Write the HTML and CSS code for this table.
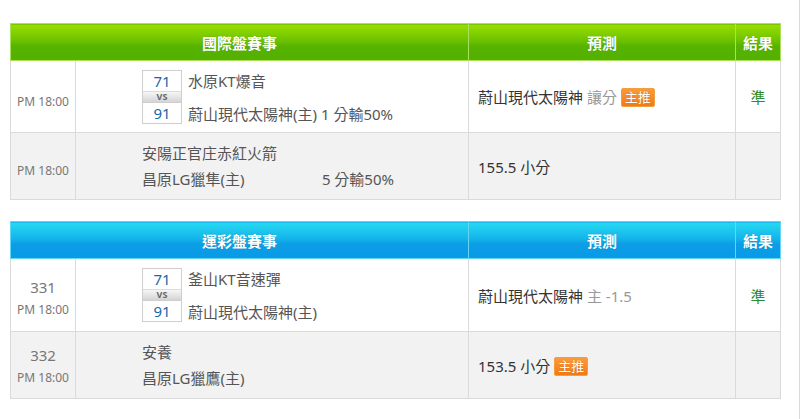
FILE: index.html
```html
<!DOCTYPE html>
<html lang="zh-Hant">
<head>
<meta charset="utf-8">
<title>賽事預測</title>
<link rel="stylesheet" href="styles.css">
</head>
<body>
<div class="page">
  <table class="board green">
    <colgroup><col class="c-time"><col class="c-match"><col class="c-pred"><col class="c-res"></colgroup>
    <thead>
      <tr><th colspan="2">國際盤賽事</th><th>預測</th><th>結果</th></tr>
    </thead>
    <tbody>
      <tr class="row-a">
        <td class="time"><div class="tbox shift"><div class="clock">PM 18:00</div></div></td>
        <td class="match">
          <div class="inner">
            <div class="score"><span class="num">71</span><span class="vs">VS</span><span class="num">91</span></div>
            <div class="teams"><span>水原KT爆音</span><span>蔚山現代太陽神(主) 1 分輸50%</span></div>
          </div>
        </td>
        <td class="pred">蔚山現代太陽神 <span class="muted">讓分</span> <span class="badge">主推</span></td>
        <td class="res">準</td>
      </tr>
      <tr class="row-b">
        <td class="time"><div class="tbox shift"><div class="clock">PM 18:00</div></div></td>
        <td class="match">
          <div class="inner plain">
            <div class="line">安陽正官庄赤紅火箭</div>
            <div class="line split"><span>昌原LG獵隼(主)</span><span>5 分輸50%</span></div>
          </div>
        </td>
        <td class="pred">155.5 小分</td>
        <td class="res"></td>
      </tr>
    </tbody>
  </table>

  <table class="board blue">
    <colgroup><col class="c-time"><col class="c-match"><col class="c-pred"><col class="c-res"></colgroup>
    <thead>
      <tr><th colspan="2">運彩盤賽事</th><th>預測</th><th>結果</th></tr>
    </thead>
    <tbody>
      <tr class="row-a">
        <td class="time"><div class="tbox nudge"><div class="gno">331</div><div class="clock">PM 18:00</div></div></td>
        <td class="match">
          <div class="inner">
            <div class="score"><span class="num">71</span><span class="vs">VS</span><span class="num">91</span></div>
            <div class="teams"><span>釜山KT音速彈</span><span>蔚山現代太陽神(主)</span></div>
          </div>
        </td>
        <td class="pred">蔚山現代太陽神 <span class="muted">主 -1.5</span></td>
        <td class="res">準</td>
      </tr>
      <tr class="row-b">
        <td class="time"><div class="tbox"><div class="gno">332</div><div class="clock">PM 18:00</div></div></td>
        <td class="match">
          <div class="inner plain">
            <div class="line">安養</div>
            <div class="line">昌原LG獵鷹(主)</div>
          </div>
        </td>
        <td class="pred">153.5 小分 <span class="badge">主推</span></td>
        <td class="res"></td>
      </tr>
    </tbody>
  </table>
</div>
</body>
</html>
```

FILE: styles.css
```css
html, body {
  margin: 0;
  padding: 0;
  background: #fff;
}
body {
  font-family: "Noto Sans", "Noto Sans CJK TC", sans-serif;
  font-size: 15px;
  color: #555;
}
.page {
  width: 800px;
  height: 419px;
  box-sizing: border-box;
  padding: 23px 0 0 10px;
  border-right: 1px solid #d9d9d9;
}
.board {
  width: 770px;
  border-collapse: collapse;
  table-layout: fixed;
  margin-bottom: 21px;
}
.c-time { width: 65px; }
.c-match { width: 393px; }
.c-pred { width: 267px; }
.c-res { width: 45px; }

.board th {
  height: 36px;
  padding: 0;
  color: #fff;
  font-size: 15px;
  font-weight: bold;
  text-align: center;
  text-shadow: 0 0 1px rgba(0,0,0,0.25);
}
.green th {
  background: linear-gradient(#9ade00 0%, #6cc200 45%, #57b300 60%, #54b000 100%);
  border: 1px solid #a9e25a;
}
.blue th {
  background: linear-gradient(#27d9f2 0%, #14b4ea 45%, #0b9de6 60%, #0a9ae6 100%);
  border: 1px solid #63d6f2;
}
.board td {
  border: 1px solid #dadada;
  padding: 0;
  vertical-align: middle;
}
.board .row-a td { height: 71px; }
.board .row-b td { height: 66px; background: #f2f2f2; }
.board.blue .row-a td { height: 72px; }

.board .time {
  text-align: center;
  color: #777;
}
.tbox.shift { padding-top: 10px; }
.tbox.nudge { padding-top: 4px; }
.clock { font-size: 12px; line-height: 16px; }
.gno { font-size: 15px; line-height: 20px; margin-bottom: 5px; }

.board .match { padding-left: 66px; }
.inner {
  width: 252px;
  display: flex;
  gap: 6px;
  align-items: stretch;
}
.inner.plain {
  flex-direction: column;
  gap: 6px;
}
.line { line-height: 20px; }
.split { display: flex; justify-content: space-between; }

.score {
  width: 38px;
  border: 1px solid #cfcfcf;
  display: flex;
  flex-direction: column;
  background: #fff;
}
.num {
  height: 20px;
  line-height: 20px;
  text-align: center;
  font-size: 15px;
  color: #1769a8;
}
.vs {
  height: 10px;
  line-height: 10px;
  text-align: center;
  font-size: 9px;
  font-weight: bold;
  color: #666;
  background: linear-gradient(#f6f6f6, #d4d4d4);
  border-top: 1px solid #dcdcdc;
  border-bottom: 1px solid #cfcfcf;
}
.teams {
  flex: 1;
  display: flex;
  flex-direction: column;
  justify-content: space-between;
  line-height: 20px;
  padding: 1px 0 0;
  white-space: nowrap;
}

.board .pred {
  padding-left: 9px;
  color: #333;
}
.muted { color: #999; }
.badge {
  display: inline-block;
  height: 17px;
  line-height: 17px;
  padding: 0 3px;
  font-size: 13px;
  color: #fff;
  border: 1px solid #f0a040;
  border-radius: 2px;
  background: linear-gradient(#fb9a3c, #f27a14);
  vertical-align: 1px;
  text-shadow: 0 0 1px rgba(0,0,0,0.3);
}
.board .res {
  text-align: center;
  color: #2f8a2f;
}
```
